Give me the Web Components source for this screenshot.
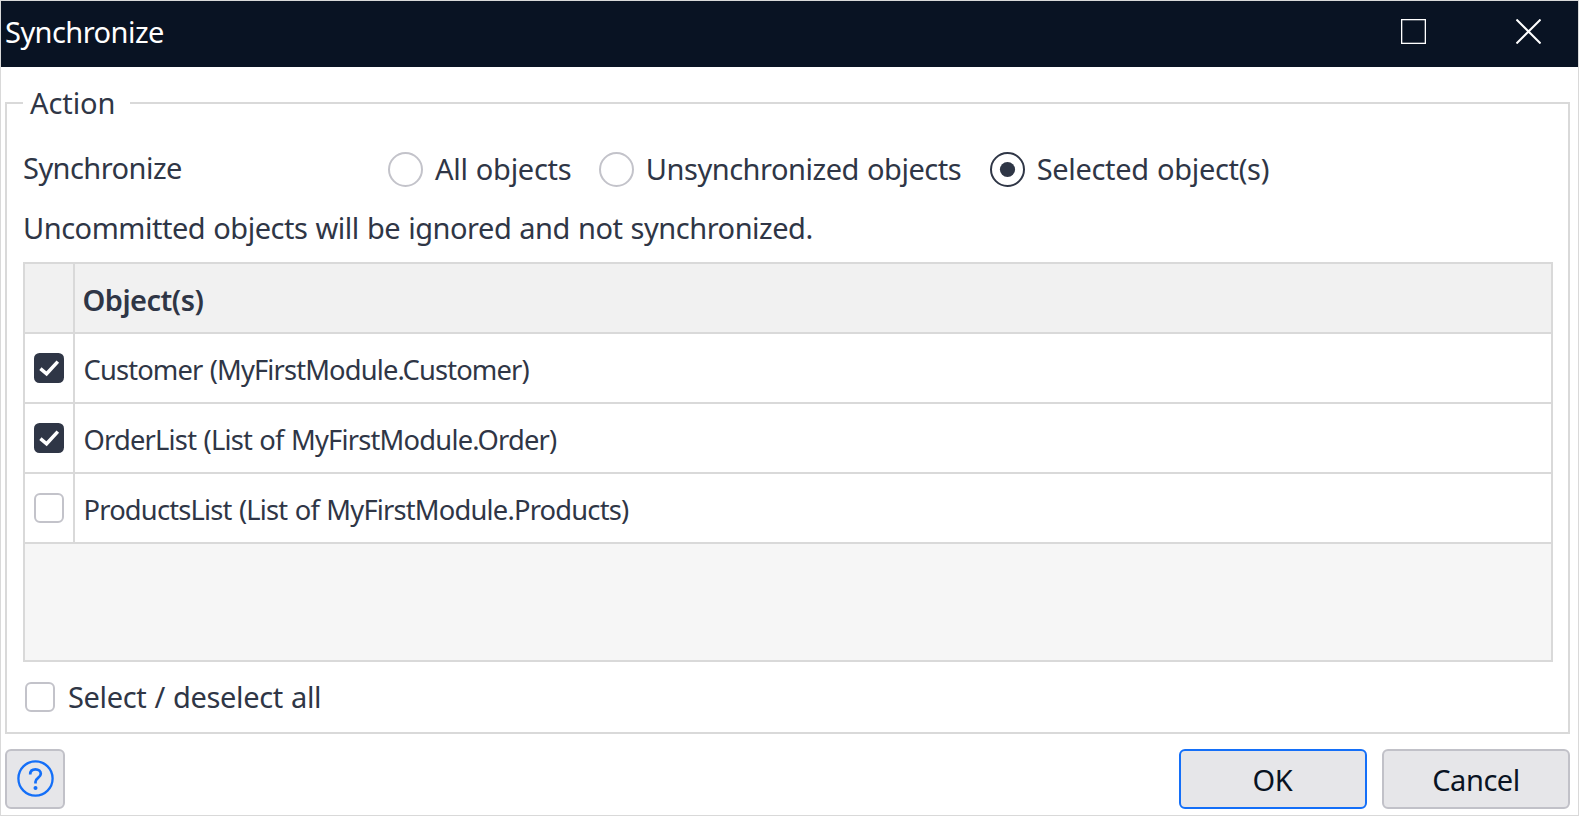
<!DOCTYPE html>
<html lang="en">
<head>
<meta charset="utf-8">
<title>Synchronize</title>
<style>
html,body{margin:0;height:100%;overflow:hidden;background:#fff}
body{font-family:"Noto Sans","Open Sans",sans-serif;font-size:29px;color:#2f3646}
</style>
</head>
<body>
<sync-dialog></sync-dialog>
<script>
const define = (name, html, setup) => customElements.define(name, class extends HTMLElement {
  connectedCallback() {
    if (this.shadowRoot) return;
    this.attachShadow({mode: 'open'}).innerHTML = html;
    if (setup) setup(this);
  }
});

// Text whose tracking is adjusted so that its ink spans the "span" attribute in pixels.
const ctx = document.createElement('canvas').getContext('2d');
define('tracked-text', `<style>
  :host{display:block;white-space:pre;line-height:40px;height:40px;flex:none}
</style><span><slot></slot></span>`, el => {
  const s = getComputedStyle(el), text = el.textContent;
  ctx.font = `${s.fontWeight} ${s.fontSize} ${s.fontFamily}`;
  const m = ctx.measureText(text);
  const ink = m.actualBoundingBoxRight + m.actualBoundingBoxLeft;
  const span = parseFloat(el.getAttribute('span'));
  const spaces = text.split(' ').length - 1;
  const wordGap = spaces;
  const gap = (span - ink - wordGap) / (text.length - 1);
  el.style.wordSpacing = '1px';
  el.style.letterSpacing = gap.toFixed(3) + 'px';
  el.style.width = span + 'px';
  el.style.textIndent = m.actualBoundingBoxLeft.toFixed(2) + 'px';
});

define('check-box', `<style>
  :host{display:block;width:30px;height:30px;flex:none}
  svg{display:block}
  .on{display:none}
  :host([checked]) .on{display:block}
  :host([checked]) .off{display:none}
</style><svg width="30" height="30" viewBox="0 0 30 30" fill="none">
  <rect class="off" x="1" y="1" width="28" height="28" rx="5" fill="#fff" stroke="#c3c3ca" stroke-width="2"/>
  <g class="on"><rect width="30" height="30" rx="5.5" fill="#2f3646"/>
  <path d="M6.4 15.6L12.6 20.8L23.8 8.6" stroke="#fff" stroke-width="3.5"/></g>
</svg>`);

define('radio-button', `<style>
  :host{display:flex;align-items:center;height:36px}
  svg{display:block;flex:none;margin-right:12.5px}
  circle{stroke:#c3c3ca}
  .dot{display:none}
  :host([checked]) circle{stroke:#2f3646}
  :host([checked]) .dot{display:block;fill:#2f3646;stroke:none}
</style><svg width="35" height="35" viewBox="0 0 35 35" fill="none">
  <circle cx="17.5" cy="17.5" r="16.5" stroke-width="2"/><circle class="dot" cx="17.5" cy="17.5" r="7.6"/>
</svg><slot></slot>`);

define('title-bar', `<style>
  :host{display:flex;align-items:center;height:66px;background:#091323;color:#fff;box-sizing:border-box;padding:0 37px 4px 5px}
  .tools{display:flex;gap:90px;margin-left:auto;margin-bottom:1px}
  svg{display:block}
</style><slot></slot><div class="tools">
<svg width="25" height="25" fill="none" stroke="#fff"><rect x=".65" y=".65" width="23.7" height="23.7" stroke-width="1.3"/></svg>
<svg width="25" height="25" fill="none" stroke="#fff"><path d="M.5.5L24.5 24.5M24.5.5L.5 24.5" stroke-width="2"/></svg>
</div>`);

define('group-box', `<style>
  :host{display:block}
  fieldset{box-sizing:border-box;margin:0;min-width:0;height:651px;border:2px solid #d9d9d9;padding:0 15px 0 16px}
  legend{box-sizing:border-box;width:107px;height:40px;margin-left:0;padding:0 0 0 7px}
</style><fieldset><legend><slot name="legend"></slot></legend><slot></slot></fieldset>`);

define('object-row', `<style>
  :host{display:grid;grid-template-columns:50px 1fr;height:68px;border-bottom:2px solid #d9d9d9;background:#fff;font-size:27.3px}
  :host([header]){background:#f1f1f1;font-size:29px;font-weight:600}
  div{display:flex;align-items:center}
  .check{justify-content:center;border-right:2px solid #d9d9d9}
  .label{padding:3px 0 0 9.5px}
  :host([header]) .label{padding:3px 0 0 8.5px}
</style><div class="check"><slot name="check"></slot></div><div class="label"><slot></slot></div>`);

define('object-table', `<style>
  :host{display:block;box-sizing:border-box;height:400px;border:2px solid #d9d9d9;background:#f6f6f6}
</style><slot></slot>`);

define('push-button', `<style>
  :host{display:block;width:188px}
  :host([icon]){width:60px}
  button{box-sizing:border-box;width:100%;height:60px;padding:0;display:flex;align-items:center;justify-content:center;
    font:inherit;letter-spacing:inherit;color:#091323;background:#e6e6e9;border:2px solid #c1c1c8;border-radius:6px}
  :host([primary]) button{border-color:#146ff8}
  :host(:not([icon])) button{padding-top:2px}
</style><button><slot></slot></button>`);

define('help-icon', `<style>:host,svg{display:block}</style>
<svg width="38" height="38" viewBox="0 0 38 38" fill="none" stroke="#146ff8">
<circle cx="19.5" cy="18.5" r="17.1" stroke-width="2.3"/>
<path d="M14.2 14.4C14.2 11.2 16.3 9.3 19.5 9.3C22.6 9.3 24.8 11.2 24.8 13.8C24.8 17.9 19.5 17.9 19.5 21.8V23.4" stroke-width="2.7"/>
<circle cx="19.5" cy="27.9" r="2" fill="#146ff8" stroke="none"/></svg>`);

define('sync-dialog', `<style>
  :host{display:flex;flex-direction:column;box-sizing:border-box;width:1579px;height:816px;border:1px solid #d9d9d9;background:#fff}
  group-box{margin:16px 8px 0 4px}
  .action{display:grid;grid-template-columns:363.5px auto auto auto;justify-content:start;height:36px;align-items:center;margin-top:27px;padding-left:1px}
  .action>tracked-text{margin-top:-2px}
  radio-button tracked-text{margin-top:-1px}
  .note{margin:22px 0 14px 2px}
  .all{display:flex;align-items:center;gap:14px;height:40px;margin:15px 0 0 2px}
  footer{display:flex;gap:15px;margin:15px 8px 0 4px}
  .fill{flex:1}
</style>
<title-bar><tracked-text span="157">Synchronize</tracked-text></title-bar>
<group-box>
  <tracked-text slot="legend" span="83.5">Action</tracked-text>
  <div class="action">
    <tracked-text span="157">Synchronize</tracked-text>
    <radio-button style="width:211.5px"><tracked-text span="135.7">All objects</tracked-text></radio-button>
    <radio-button style="width:390.5px"><tracked-text span="313" style="margin-left:1.3px">Unsynchronized objects</tracked-text></radio-button>
    <radio-button checked><tracked-text span="231" style="margin-left:.7px">Selected object(s)</tracked-text></radio-button>
  </div>
  <tracked-text class="note" span="786.5">Uncommitted objects will be ignored and not synchronized.</tracked-text>
  <object-table>
    <object-row header><tracked-text span="120">Object(s)</tracked-text></object-row>
    <object-row><check-box slot="check" checked></check-box><tracked-text span="445">Customer (MyFirstModule.Customer)</tracked-text></object-row>
    <object-row><check-box slot="check" checked></check-box><tracked-text span="472.5">OrderList (List of MyFirstModule.Order)</tracked-text></object-row>
    <object-row><check-box slot="check"></check-box><tracked-text span="543.5" style="margin-left:1px">ProductsList (List of MyFirstModule.Products)</tracked-text></object-row>
  </object-table>
  <div class="all"><check-box></check-box><tracked-text span="251">Select / deselect all</tracked-text></div>
</group-box>
<footer>
  <push-button icon><help-icon></help-icon></push-button><span class="fill"></span>
  <push-button primary><tracked-text span="39.3">OK</tracked-text></push-button>
  <push-button><tracked-text span="85.5">Cancel</tracked-text></push-button>
</footer>`);
</script>
</body>
</html>
